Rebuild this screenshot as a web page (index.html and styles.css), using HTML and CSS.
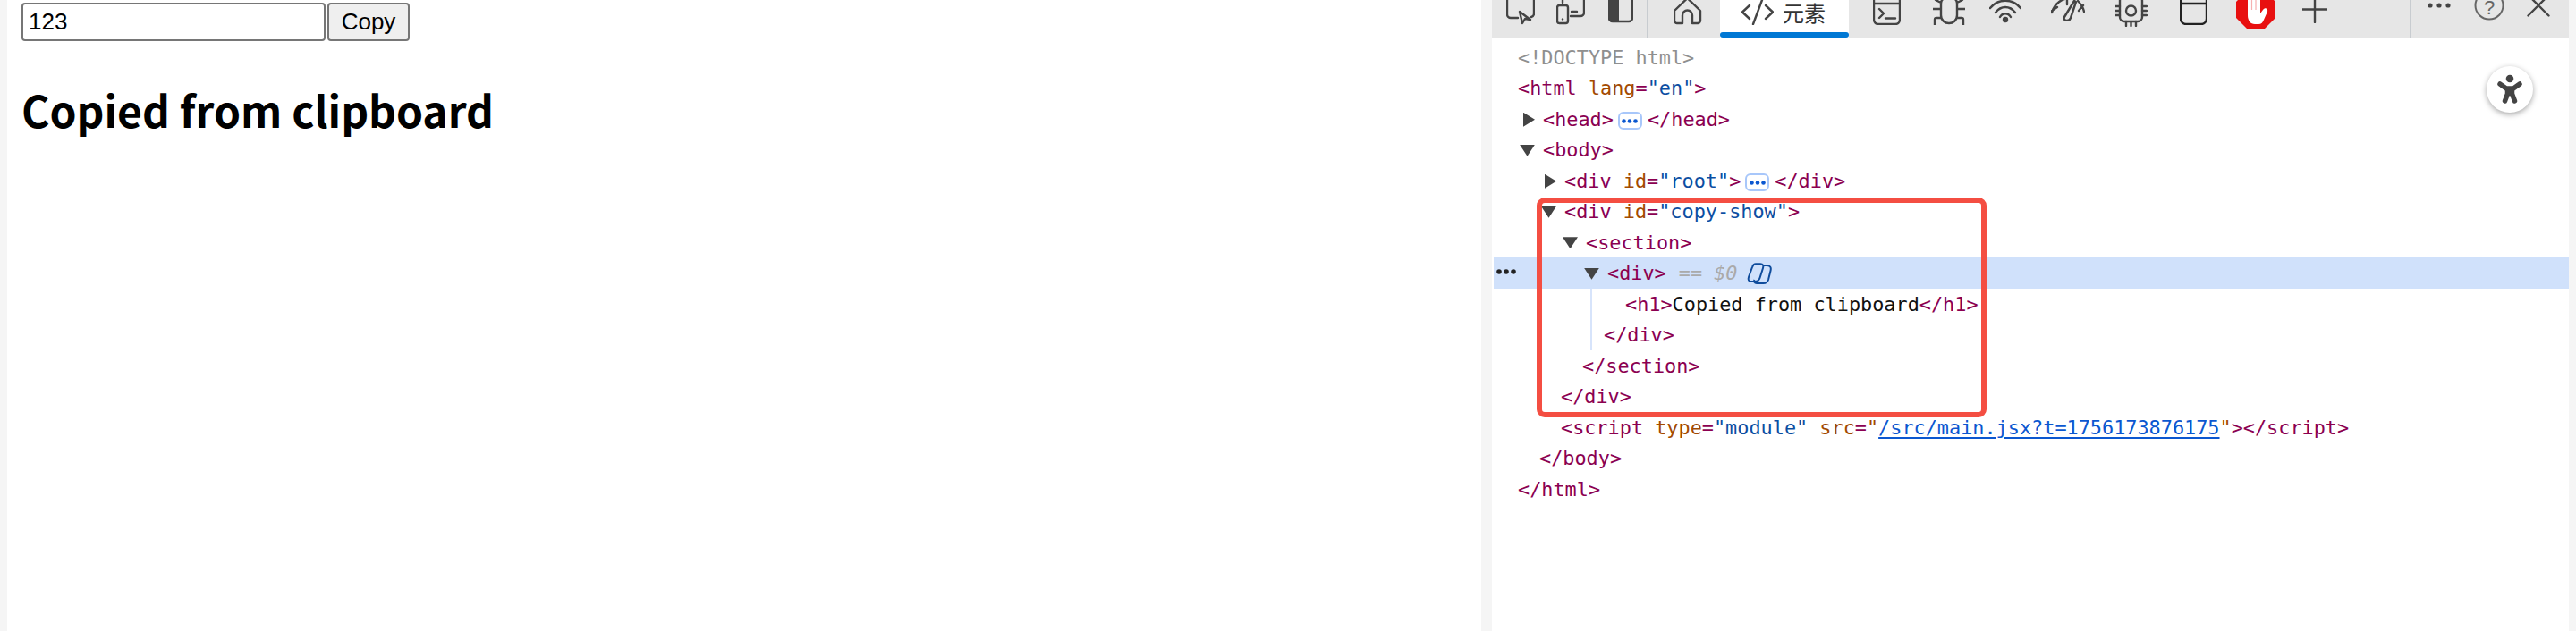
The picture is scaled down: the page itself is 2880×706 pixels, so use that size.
FILE: index.html
```html
<!DOCTYPE html>
<html lang="en">
<head>
<meta charset="utf-8">
<title>Copied from clipboard</title>
<link rel="stylesheet" href="styles.css">
</head>
<body>
<div class="screen">
  <div class="edge"></div>
  <main class="page">
    <div class="form"><input class="field" value="123"><button class="btn">Copy</button></div>
    <h1 class="title">Copied from clipboard</h1>
  </main>
  <div class="gutter"></div>
  <section class="devtools">
    <nav class="tabbar">
      <svg class="ic i-inspect" width="32" height="28" viewBox="0 0 32 28"><path d="M1 -6V16a4 4 0 0 0 4 4H13M31 -6V15a4 4 0 0 1-3 4"/><path d="M15 13L18 26L21 21L27 22Z"/></svg>
      <svg class="ic i-device" width="32" height="28" viewBox="0 0 32 28"><rect x="1" y="6" width="12" height="20" rx="2.5"/><path d="M7 -2V3M31 -2V14a4 4 0 0 1-4 4H16M17 13H23"/><circle class="solid" cx="7" cy="21.5" r="1.2"/></svg>
      <svg class="ic i-panel" width="28" height="26" viewBox="0 0 28 26"><rect x="1" y="-6" width="26" height="30" rx="4"/><path class="solid" d="M5 -6H12V25H5a5 5 0 0 1-5-5V-1z"/></svg>
      <i class="bar-sep first"></i>
      <svg class="ic i-home" width="32" height="28" viewBox="0 0 32 28"><path d="M4 26a3 3 0 0 1-3-3V12L15.500 -2L30 12V23a3 3 0 0 1-3 3H21V17a5.500 5.500 0 0 0-11 0V26Z"/></svg>
      <div class="tab">
        <svg class="ic" width="36" height="28" viewBox="0 0 36 28"><path d="M9 6L1 13.500L9 21M27 6L35 13.500L27 21M23 0L13 27"/></svg>
        <span class="tab-label">元素</span>
      </div>
      <svg class="ic i-console" width="31" height="28" viewBox="0 0 31 28"><rect x="1" y="-6" width="29" height="33" rx="5"/><path d="M1 4H30M7 10L12 15L7 20M14 20.500H25"/></svg>
      <svg class="ic i-bug" width="36" height="28" viewBox="0 0 36 28"><path d="M9 4C9 -6 27 -6 27 4V17C27 29 9 29 9 17ZM0 10H9M27 10H36M3 0L9 3M33 0L27 3M2 28V22a2 2 0 0 1 2-2H9M34 28V22a2 2 0 0 0-2-2H27"/></svg>
      <svg class="ic i-wifi" width="36" height="28" viewBox="0 0 36 28"><path d="M1 9C10 -2 26 -2 35 9M7 14C13 6 23 6 29 14M12 19C15 14 21 14 24 19"/><circle class="solid" cx="18" cy="22" r="3.200"/></svg>
      <svg class="ic i-gauge" width="38" height="24" viewBox="0 0 38 24"><path d="M1 14C4 4 12 -2 22 -2M1 12L7 8M18 -2V5M30 1C33 4 36 8 37 13M31 12L36 6"/><path d="M15 19L26 1L28 2L22 20C20 25 13 23 15 19Z"/></svg>
      <svg class="ic i-chip" width="36" height="30" viewBox="0 0 36 30"><rect x="5" y="-4" width="25" height="28" rx="5"/><circle cx="17.500" cy="12" r="5.500"/><path d="M0 7H5M0 12H5M0 17H5M30 7H35M30 12H35M30 17H35M12 24V29M17.500 24V29M23 24V29"/></svg>
      <svg class="ic i-box" width="31" height="28" viewBox="0 0 31 28"><rect x="1" y="-6" width="29" height="33" rx="6"/><path d="M1 4H30"/></svg>
      <svg class="i-stop" width="44" height="33" viewBox="0 0 44 33"><path class="stop-red" d="M13 -11H31L44 2V20L31 33H13L0 20V2Z"/><path class="stop-hand" d="M13 -2V17C13 23 16 27 21 27H25C28 27 30 25 31 22L35 13C36 9 32 8 30 11L27 15V-4H13Z"/><path class="stop-line" d="M17.500 -2V11M22 -2V11"/></svg>
      <svg class="ic i-plus" width="28" height="26" viewBox="0 0 28 26"><path d="M0 10.500H28M14 -2V25"/></svg>
      <i class="bar-sep last"></i>
      <svg class="i-dots" width="26" height="12" viewBox="0 0 26 12"><circle cx="3" cy="6" r="2.600"/><circle cx="13" cy="6" r="2.600"/><circle cx="23" cy="6" r="2.600"/></svg>
      <svg class="ic i-help" width="34" height="24" viewBox="0 0 34 24"><circle cx="17" cy="6" r="15.500"/><text class="help-q" x="17" y="15.500" text-anchor="middle">?</text></svg>
      <svg class="ic i-close" width="26" height="20" viewBox="0 0 26 20"><path d="M1 -6L24.500 17.500M25 -6L1.500 17.500"/></svg>
    </nav>
    <div class="tree">
      <div class="row lv0 doctype">&lt;!DOCTYPE html&gt;</div>
      <div class="row lv0"><b>&lt;html</b><u>lang</u><b>=</b><em>"en"</em><b>&gt;</b></div>
      <div class="row lv1 opener"><i class="tri right"></i><b>&lt;head&gt;</b><span class="more"><svg width="18" height="5" viewBox="0 0 18 5"><circle cx="2.500" cy="2.500" r="2.300"/><circle cx="9" cy="2.500" r="2.300"/><circle cx="15.500" cy="2.500" r="2.300"/></svg></span><b>&lt;/head&gt;</b></div>
      <div class="row lv1 opener"><i class="tri down"></i><b>&lt;body&gt;</b></div>
      <div class="row lv2 opener"><i class="tri right"></i><b>&lt;div</b><u>id</u><b>=</b><em>"root"</em><b>&gt;</b><span class="more"><svg width="18" height="5" viewBox="0 0 18 5"><circle cx="2.500" cy="2.500" r="2.300"/><circle cx="9" cy="2.500" r="2.300"/><circle cx="15.500" cy="2.500" r="2.300"/></svg></span><b>&lt;/div&gt;</b></div>
      <div class="row lv2 opener"><i class="tri down"></i><b>&lt;div</b><u>id</u><b>=</b><em>"copy-show"</em><b>&gt;</b></div>
      <div class="row lv3 opener"><i class="tri down"></i><b>&lt;section&gt;</b></div>
      <div class="row lv4 opener selected">
        <svg class="gutter-dots" width="22" height="6" viewBox="0 0 22 6"><circle cx="3" cy="3" r="2.800"/><circle cx="11" cy="3" r="2.800"/><circle cx="19" cy="3" r="2.800"/></svg>
        <i class="tri down"></i><b>&lt;div&gt;</b><span class="dollar">== $0</span>
        <svg class="copilot" width="28" height="24" viewBox="0 0 28 24"><path d="M10 1.200H15C18 1.200 19 3 18 6L14.500 17C13.500 20 12 21 9 21H5C2 21 1 19 2 16L6 5C7 2 8 1.200 10 1.200Z"/><path d="M18 3H22C26 3 27.500 5 26.500 9L24 19C23 22 21.500 23 18.500 23H11C8.500 23 7.500 21 8.500 19"/></svg>
      </div>
      <div class="row lv5 guide"><b>&lt;h1&gt;</b><span class="plain">Copied from clipboard</span><b>&lt;/h1&gt;</b></div>
      <div class="row lv4 guide"><b>&lt;/div&gt;</b></div>
      <div class="row lv3"><b>&lt;/section&gt;</b></div>
      <div class="row lv2"><b>&lt;/div&gt;</b></div>
      <div class="row lv2"><b>&lt;script</b><u>type</u><b>=</b><em>"module"</em><u>src</u><b>=</b><em class="q">"</em><a class="link">/src/main.jsx?t=1756173876175</a><em class="q">"</em><b>&gt;&lt;/script&gt;</b></div>
      <div class="row lv1"><b>&lt;/body&gt;</b></div>
      <div class="row lv0"><b>&lt;/html&gt;</b></div>
      <div class="callout"></div>
    </div>
    <button class="a11y"><svg width="52" height="52" viewBox="0 0 52 52"><circle class="head" cx="26" cy="14" r="4.300"/><path class="limb" d="M15 20L22 25H30L37 20M23.500 25V31L20.500 39M28.500 25V31L31.500 39"/><path class="torso" d="M21 24H31V33H21Z"/></svg></button>
  </section>
  <div class="edge end"></div>
</div>
</body>
</html>
```
FILE: styles.css
```css
* { box-sizing: border-box; }
html, body { margin: 0; padding: 0; height: 100%; overflow: hidden; background: #fff; }
.screen { display: flex; width: 2880px; height: 706px; }
.edge { flex: 0 0 8px; background: #f5f5f5; }
.page { flex: 0 0 1648px; padding: 3px 0 0 16px; background: #fff; }
.gutter { flex: 0 0 12px; background: #f5f5f5; }

.form { display: flex; height: 43px; }
.field {
  width: 340px; height: 43px; padding: 0 6px; margin: 0 2px 0 0;
  border: 2px solid #767676; border-radius: 4px;
  font: 26px "Liberation Sans", sans-serif; color: #000; background: #fff;
}
.btn {
  width: 92px; height: 43px; padding: 0; margin: 0;
  border: 2px solid #767676; border-radius: 4px; background: #efefef;
  font: 26px "Liberation Sans", sans-serif; color: #000;
}
.title {
  margin: 44px 0 0 0;
  font: 700 48px/64px "Noto Sans CJK SC", sans-serif; color: #000;
}

.devtools { position: relative; flex: 0 0 1204px; background: #fff; }
.tabbar { display: flex; align-items: flex-start; height: 42px; overflow: hidden; background: #e6e6e6; }
.tabbar svg { flex: none; display: block; overflow: hidden; }
.ic { fill: none; stroke: #444; stroke-width: 2.400; stroke-linecap: round; stroke-linejoin: round; }
.ic .solid { fill: #444; stroke: none; }
.i-inspect { margin-left: 16px; }
.i-device { margin-left: 24px; }
.i-panel { margin-left: 26px; }
.bar-sep { flex: none; width: 2px; height: 42px; background: #c8ccd0; }
.bar-sep.first { margin-left: 15px; }
.i-home { margin-left: 28px; }
.tab {
  display: flex; align-items: flex-start; flex: none;
  width: 144px; height: 42px; margin-left: 20px; padding: 0 0 0 24px; background: #fff;
  position: relative;
}
.tab::after { content: ""; position: absolute; left: 0; right: 0; bottom: 0; height: 6px; border-radius: 3px; background: #0078d4; }
.tab-label { margin: 0 0 0 10px; font: 24px/28px "Noto Sans CJK SC", sans-serif; color: #333; }
.i-console { margin-left: 27px; }
.i-bug { margin-left: 36px; }
.i-wifi { margin-left: 27px; }
.i-gauge { margin-left: 33px; }
.i-chip { margin-left: 34px; }
.i-box { margin-left: 36px; stroke: #222; }
.i-stop { margin-left: 32px; }
.stop-red { fill: #e81010; }
.stop-hand { fill: #fff; }
.stop-line { fill: none; stroke: #f6b0b0; stroke-width: 1.200; }
.i-plus { margin-left: 30px; }
.bar-sep.last { margin-left: 92px; }
.i-dots { margin-left: 18px; fill: #444; }
.i-help { margin-left: 26px; stroke: #666; stroke-width: 2; }
.help-q { font: 22px "Liberation Sans", sans-serif; fill: #666; stroke: none; }
.i-close { margin-left: 25px; }

.tree { position: relative; padding: 4.500px 0 0 2px; font: 21.850px/30px "DejaVu Sans Mono", monospace; }
.row { display: flex; align-items: center; height: 34.500px; padding-top: 2px; white-space: pre; }
.row b { font-weight: 400; color: #8b0051; }
.row u { text-decoration: none; color: #a34a00; }
.row em { font-style: normal; color: #0b4ea2; }
.row em.q { color: #a34a00; }
.row > * + u { margin-left: 13.150px; }
.row .link { color: #0b57d0; text-decoration: underline; text-underline-offset: 3px; }
.plain { color: #111; }
.doctype { color: #8f8f8f; }
.lv0 { padding-left: 27px; }
.lv1 { padding-left: 51px; }
.lv2 { padding-left: 75px; }
.lv3 { padding-left: 99px; }
.lv4 { padding-left: 123px; }
.lv5 { padding-left: 147px; }
.opener { margin-left: 4px; }
.selected { margin-left: 0; padding-left: 127px; background: #d0e1fb; position: relative; }
.tri { flex: none; background: #444; }
.tri.right { width: 13px; height: 16px; margin: 0 9px 0 -22px; clip-path: polygon(0 0, 100% 50%, 0 100%); }
.tri.down { width: 17px; height: 13px; margin: 0 9px 0 -26px; clip-path: polygon(0 0, 100% 0, 50% 100%); }
.more {
  flex: none; display: flex; align-items: center; justify-content: center;
  width: 27px; height: 20px; margin: 3px 6px 0 5px;
  border: 2px solid #a8c7fa; border-radius: 6px; background: #fff;
}
.more svg { fill: #0b57d0; display: block; }
.gutter-dots { position: absolute; left: 3px; top: 13px; fill: #222; }
.dollar { margin-left: 14px; font-style: italic; color: #aaa; }
.copilot { flex: none; margin-left: 10px; fill: none; stroke: #0f4c9c; stroke-width: 2; }
.guide { position: relative; }
.guide::before { content: ""; position: absolute; left: 108px; top: 0; bottom: 0; width: 2px; background: #d7e4fb; }
.callout {
  position: absolute; left: 50px; top: 179px; width: 503px; height: 246px;
  border: 6px solid #f44e42; border-radius: 9px; pointer-events: none;
}
.a11y {
  position: absolute; left: 1112px; top: 74px; width: 52px; height: 52px; padding: 0;
  border: 0; border-radius: 50%; background: #fff; box-shadow: 0 2px 6px rgba(0,0,0,.35);
}
.a11y svg { display: block; }
.head { fill: #444; }
.limb { fill: none; stroke: #444; stroke-width: 5.500; stroke-linecap: round; stroke-linejoin: round; }
.torso { fill: #444; }
```
